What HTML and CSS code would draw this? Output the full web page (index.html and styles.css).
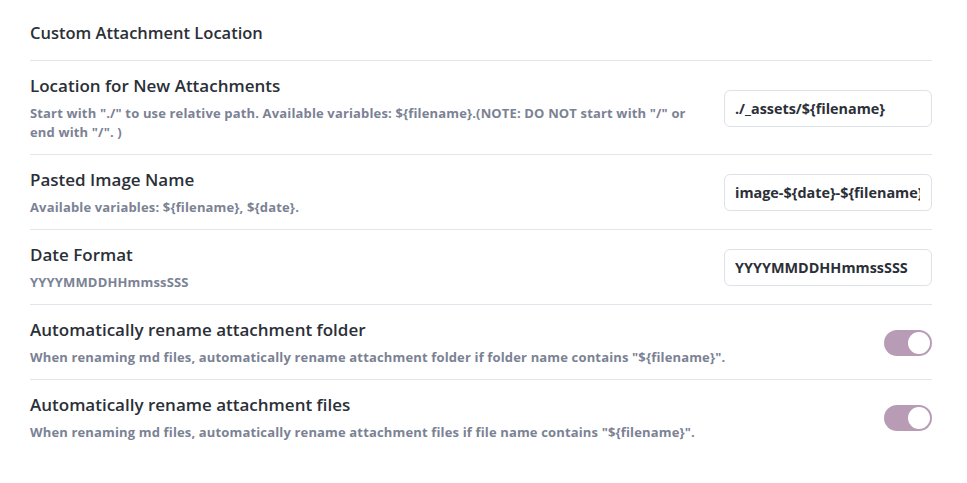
FILE: index.html
```html
<!DOCTYPE html>
<html lang="en">
<head>
<meta charset="utf-8">
<title>Custom Attachment Location</title>
<link rel="stylesheet" href="styles.css">
</head>
<body>
<div class="settings">
  <h3 class="section-title">Custom Attachment Location</h3>
  <div class="setting-item">
    <div class="info">
      <div class="name">Location for New Attachments</div>
      <div class="desc">Start with "./" to use relative path. Available variables: ${filename}.(NOTE: DO NOT start with "/" or end with "/". )</div>
    </div>
    <div class="control"><input class="text-input" type="text" value="./_assets/${filename}"></div>
  </div>
  <div class="setting-item">
    <div class="info">
      <div class="name">Pasted Image Name</div>
      <div class="desc">Available variables: ${filename}, ${date}.</div>
    </div>
    <div class="control"><input class="text-input" type="text" value="image-${date}-${filename}"></div>
  </div>
  <div class="setting-item">
    <div class="info">
      <div class="name">Date Format</div>
      <div class="desc">YYYYMMDDHHmmssSSS</div>
    </div>
    <div class="control"><input class="text-input" type="text" value="YYYYMMDDHHmmssSSS"></div>
  </div>
  <div class="setting-item">
    <div class="info">
      <div class="name">Automatically rename attachment folder</div>
      <div class="desc">When renaming md files, automatically rename attachment folder if folder name contains "${filename}".</div>
    </div>
    <div class="control"><div class="toggle is-on"><span class="knob"></span></div></div>
  </div>
  <div class="setting-item">
    <div class="info">
      <div class="name">Automatically rename attachment files</div>
      <div class="desc">When renaming md files, automatically rename attachment files if file name contains "${filename}".</div>
    </div>
    <div class="control"><div class="toggle is-on"><span class="knob"></span></div></div>
  </div>
</div>
</body>
</html>
```
FILE: styles.css
```css
html, body {
  margin: 0;
  padding: 0;
  background: #ffffff;
}

body {
  font-family: "Open Sans", "Noto Sans", sans-serif;
  color: #2b2f38;
}

.settings {
  padding: 20px 35px 0 30px;
}

.section-title {
  margin: 0;
  font-size: 16.5px;
  font-weight: 600;
  line-height: 26px;
  padding-bottom: 14px;
  border-bottom: 1px solid #e3e5ec;
}

.setting-item {
  display: flex;
  align-items: center;
  gap: 20px;
  padding: 13px 0 12px 0;
  border-bottom: 1px solid #e3e5ec;
}

.setting-item:last-child {
  border-bottom: none;
}

.info {
  flex: 1;
  min-width: 0;
}

.name {
  font-size: 17px;
  font-weight: 600;
  line-height: 24px;
  color: #2b2f38;
}

.desc {
  margin-top: 6px;
  font-size: 13px;
  font-weight: 700;
  letter-spacing: 0.15px;
  line-height: 19px;
  color: #7b8294;
}

.control {
  flex: none;
  display: flex;
  justify-content: flex-end;
}

.text-input {
  box-sizing: border-box;
  width: 208px;
  height: 37px;
  padding: 0 11px 0 10px;
  border: 1px solid #dde1e8;
  border-radius: 6px;
  background: #ffffff;
  font-family: "Open Sans", "Noto Sans", sans-serif;
  font-size: 14.4px;
  font-weight: 700;
  color: #2b2f38;
  outline: none;
}

.toggle {
  position: relative;
  width: 48px;
  height: 26px;
  border-radius: 13px;
  background: #b89cb6;
}

.toggle .knob {
  position: absolute;
  top: 2px;
  right: 2px;
  width: 22px;
  height: 22px;
  border-radius: 50%;
  background: #ffffff;
}
```
